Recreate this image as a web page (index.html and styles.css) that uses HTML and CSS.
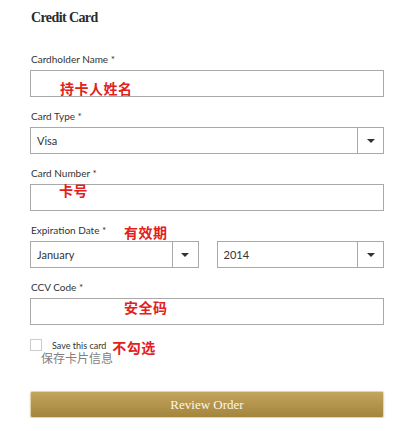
FILE: index.html
```html
<!DOCTYPE html>
<html lang="en">
<head>
<meta charset="utf-8">
<title>Credit Card</title>
<link rel="stylesheet" href="styles.css">
</head>
<body>
<div class="card">
  <h2 class="title">Credit Card</h2>

  <div class="field">
    <label class="label">Cardholder Name *</label>
    <div class="box"></div>
    <span class="note note-name">持卡人姓名</span>
  </div>

  <div class="field">
    <label class="label">Card Type *</label>
    <div class="box select">
      <span class="value">Visa</span>
      <span class="arrow"></span>
    </div>
  </div>

  <div class="field">
    <label class="label">Card Number *</label>
    <div class="box"></div>
    <span class="note note-number">卡号</span>
  </div>

  <div class="field">
    <label class="label">Expiration Date *</label>
    <div class="pair">
      <div class="box select month">
        <span class="value">January</span>
        <span class="arrow"></span>
      </div>
      <div class="box select year">
        <span class="value">2014</span>
        <span class="arrow"></span>
      </div>
    </div>
    <span class="note note-exp">有效期</span>
  </div>

  <div class="field">
    <label class="label">CCV Code *</label>
    <div class="box"></div>
    <span class="note note-ccv">安全码</span>
  </div>

  <div class="save">
    <span class="check"></span>
    <span class="save-text">Save this card</span>
    <span class="note-inline">不勾选</span>
    <span class="save-cn">保存卡片信息</span>
  </div>

  <button class="review">Review Order</button>
</div>
</body>
</html>
```

FILE: styles.css
```css
html, body {
  margin: 0;
  padding: 0;
  background: #ffffff;
}

.card {
  width: 354px;
  padding: 0 0 0 30px;
  font-family: Lato, "Open Sans", sans-serif;
  color: #333333;
}

.title {
  margin: 0;
  padding: 9px 0 0 1px;
  height: 52px;
  box-sizing: border-box;
  font-family: "Liberation Serif", "DejaVu Serif", serif;
  font-weight: bold;
  font-size: 14px;
  line-height: 18px;
  letter-spacing: -0.6px;
  color: #2b2b2b;
}

.field {
  position: relative;
  margin-bottom: 12px;
}

.label {
  display: block;
  height: 14px;
  line-height: 14px;
  font-size: 10px;
  padding-left: 1px;
  margin-bottom: 4px;
  color: #333333;
}

.box {
  box-sizing: border-box;
  height: 27px;
  border: 1px solid #a9a9a9;
  background: #ffffff;
}

.select {
  display: flex;
  align-items: stretch;
}

.select .value {
  flex: 1;
  padding-left: 6px;
  font-size: 11px;
  line-height: 25px;
  color: #333333;
}

.select .arrow {
  width: 25px;
  border-left: 1px solid #a9a9a9;
  display: flex;
  align-items: center;
  justify-content: center;
}

.select .arrow::after {
  content: "";
  width: 0;
  height: 0;
  border-left: 4px solid transparent;
  border-right: 4px solid transparent;
  border-top: 4px solid #333333;
  margin-top: 1px;
}

.pair {
  display: flex;
  gap: 18px;
}

.month {
  width: 169px;
}

.year {
  width: 168px;
}

.note,
.note-inline {
  font-family: "Noto Sans CJK SC", "Noto Sans", sans-serif;
  font-weight: bold;
  font-size: 14px;
  line-height: 20px;
  color: #e3211c;
  letter-spacing: 0.5px;
}

.note {
  position: absolute;
}

.note-name {
  left: 30px;
  top: 26px;
}

.note-number {
  left: 29px;
  top: 14px;
}

.note-exp {
  left: 94px;
  top: -1px;
}

.note-ccv {
  left: 94px;
  top: 17px;
}

.save {
  position: relative;
  display: flex;
  align-items: center;
  height: 16px;
  margin-top: 12px;
}

.check {
  box-sizing: border-box;
  width: 12px;
  height: 12px;
  border: 1px solid #cccccc;
  background: #ffffff;
  margin-right: 10px;
}

.save-text {
  font-size: 9px;
  line-height: 10px;
  color: #333333;
  margin-right: 6px;
  margin-top: 1px;
}

.note-inline {
  line-height: 16px;
  margin-top: 3px;
}

.save-cn {
  position: absolute;
  left: 11px;
  top: 15px;
  font-family: "Noto Sans CJK SC", "Noto Sans", sans-serif;
  font-size: 12px;
  line-height: 12px;
  color: #808080;
}

.review {
  display: block;
  box-sizing: border-box;
  width: 354px;
  height: 27px;
  margin-top: 38px;
  padding: 0;
  border: 1px solid #e4d6ae;
  border-radius: 2px;
  background: linear-gradient(to bottom, #c4a45e 0%, #a4853c 100%);
  box-shadow: 0 1px 2px rgba(120, 100, 50, 0.25);
  font-family: "Liberation Serif", "DejaVu Serif", serif;
  font-size: 13px;
  color: #fbf6ea;
  cursor: pointer;
}
```
